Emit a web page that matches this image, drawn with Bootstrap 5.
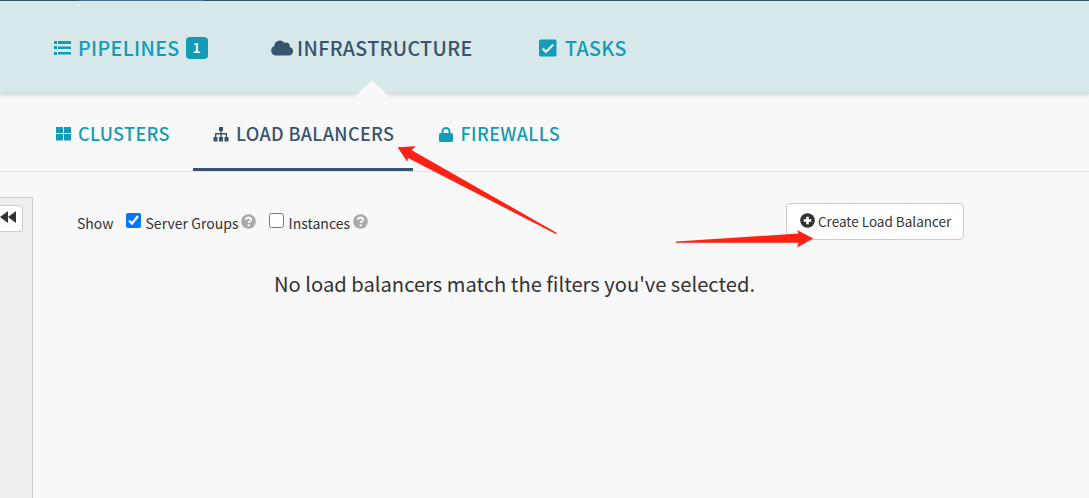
<!DOCTYPE html>
<html lang="en">
<head>
<meta charset="utf-8">
<title>Load Balancers</title>
<link href="https://cdn.jsdelivr.net/npm/bootstrap@5.3.0/dist/css/bootstrap.min.css" rel="stylesheet">
<style>
body{background:#f8f8f8;color:#333;font-family:"Noto Sans CJK SC","Noto Sans",sans-serif;font-size:14px;height:498px;overflow:hidden}
.topbar{height:94px;background:#d7e8eb;border-top:1px solid #36536f;box-shadow:0 1px 4px rgba(0,0,0,.15),inset 0 -3px 3px -2px rgba(0,0,0,.06);padding-left:53px}
.topbar::before{content:"";position:absolute;top:-1px;left:79px;width:124px;height:1px;background:#4a7099}
.main-link{height:93px;color:#139cb5;font-size:19.6px;letter-spacing:.37px;font-weight:500;line-height:20px;text-decoration:none;white-space:nowrap}
.main-link.current::after{content:"";position:absolute;left:83px;bottom:-3px;border:18px solid transparent;border-top:0;border-bottom:17px solid #f8f8f8}
.count{width:22px;height:22px;border-radius:4px;background:#139cb5;font-size:13px;letter-spacing:0;line-height:22px;font-weight:700;margin-left:6px}
.subbar{height:78px;border-bottom:1px solid #dbe5eb;padding-left:36px}
.sub-link{height:77px;color:#139cb5;font-size:18px;letter-spacing:.36px;font-weight:500;line-height:20px;padding:3px 0 3px 20px;text-decoration:none;white-space:nowrap}
.sub-link.current{border-bottom:3px solid #38536d;padding-bottom:0}
.sub-link svg{margin-top:3px}
.current{color:#38536d}
.rail{width:33px;height:310px;margin-top:25px;background:#eee;border:1px solid #ccc;border-left:0}
.collapse-btn{width:23px;height:27px;margin-top:7px;background:#fff;border:1px solid #ccc;border-left:0;border-radius:0 4px 4px 0}
.collapse-btn svg{margin-bottom:3px}
.work{padding:31px 0 0 44px;width:931px}
.tools{height:37px}
.opts{height:40px;line-height:20px}
.opts input{width:15px;height:15px;margin:0 0 6px}
.create{width:178px;height:37px;background:#fff;border:1px solid #ccc;border-radius:4px;color:#333;font-size:13.5px;padding:0 0 2px 13px;line-height:20px;white-space:nowrap}
.empty{font-size:20.160px;line-height:30px;margin:29px 0 0 197px;white-space:nowrap}
svg{flex:none;display:block}
.arrows{left:0;top:0;pointer-events:none}
</style>
</head>
<body class="position-relative">
<nav class="topbar position-relative d-flex">
  <a href="#" class="main-link d-flex align-items-center" style="width:218px">
    <svg width="18" height="14" fill="currentColor"><path d="M1 0h3v3H1zM1 5h3v3H1zM1 11h3v3H1zM5 0h13v3H5zM5 5.500h13v2.500H5zM5 11h13v2.500H5z"/></svg>
    <span style="margin-left:7px">PIPELINES</span><span class="count text-white text-center">1</span>
  </a>
  <a href="#" class="main-link current position-relative d-flex align-items-center" style="width:268px">
    <svg width="22" height="16" viewBox="0 0 22 16" fill="currentColor"><path d="M5 15.500a5 5 0 0 1-1.700-9.600A5.700 5.700 0 0 1 13.700 3a3.500 3.500 0 0 1 5 4 4.300 4.300 0 0 1-1 8.500z"/></svg>
    <span style="margin-left:4px">INFRASTRUCTURE</span>
  </a>
  <a href="#" class="main-link d-flex align-items-center">
    <svg width="18" height="18" viewBox="0 0 18 18"><rect width="17.500" height="17" y=".5" rx="1.500" fill="currentColor"/><path d="m3.500 9.300 3.500 3.500 7.300-7.300" fill="none" stroke="#d7e8eb" stroke-width="2.400"/></svg>
    <span style="margin-left:8px">TASKS</span>
  </a>
</nav>
<nav class="subbar d-flex">
  <a href="#" class="sub-link d-flex align-items-center" style="width:157px">
    <svg width="15" height="14" fill="currentColor"><path d="M0 0h7v6H0zM8 0h7v6H8zM0 7h7v6.500H0zM8 7h7v6.500H8z"/></svg>
    <span style="margin-left:7px">CLUSTERS</span>
  </a>
  <a href="#" class="sub-link current d-flex align-items-center" style="width:220px">
    <svg width="16" height="15" viewBox="0 0 16 15" fill="currentColor"><path d="M6 0h4v4H8.700v2H14v4h1.500v4.500h-4V10h1.200V7.500h-4V10H10v4.500H6V10h1.300V7.500h-4V10h1.200v4.500h-4V10H2V6h5.300V4H6z"/></svg>
    <span style="margin-left:7px">LOAD BALANCERS</span>
  </a>
  <a href="#" class="sub-link d-flex align-items-center" style="padding-left:26px">
    <svg width="14" height="15" viewBox="0 0 14 15"><path d="M3.500 7V4.500a3.500 3.500 0 0 1 7 0V7" fill="none" stroke="currentColor" stroke-width="2"/><rect y="6" width="14" height="9" rx="1.500" fill="currentColor"/></svg>
    <span style="margin-left:7.500px">FIREWALLS</span>
  </a>
</nav>
<main class="d-flex">
  <aside class="rail flex-shrink-0">
    <button class="collapse-btn d-flex align-items-center p-0" aria-label="Collapse filters"><svg width="16" height="12" fill="#333"><path d="M8 0v12L0 6zM16 0v12L8 6z"/></svg></button>
  </aside>
  <section class="work">
    <div class="tools d-flex justify-content-between">
      <div class="opts d-flex align-items-center">
        <span style="width:49px">Show</span>
        <input type="checkbox" checked aria-label="Server Groups">
        <span style="margin-left:4.500px;width:95.500px;letter-spacing:.03px">Server Groups</span>
        <svg width="15" height="15" viewBox="0 0 15 15" style="margin-bottom:4px"><circle cx="7.500" cy="7.500" r="7.300" fill="#aaa"/><path d="M5 5.800C5.200 2.900 10 2.900 10 5.700c0 1.700-2.300 1.800-2.300 3.400M6.600 11.300h2.200" fill="none" stroke="#f8f8f8" stroke-width="2.100"/></svg>
        <input type="checkbox" style="margin-left:13px" aria-label="Instances">
        <span style="margin-left:4.500px;width:64px;letter-spacing:.03px">Instances</span>
        <svg width="15" height="15" viewBox="0 0 15 15" style="margin-bottom:4px"><circle cx="7.500" cy="7.500" r="7.300" fill="#aaa"/><path d="M5 5.800C5.200 2.900 10 2.900 10 5.700c0 1.700-2.300 1.800-2.300 3.400M6.600 11.300h2.200" fill="none" stroke="#f8f8f8" stroke-width="2.100"/></svg>
      </div>
      <button class="create btn d-flex align-items-center">
        <svg width="15" height="15" viewBox="0 0 15 15"><circle cx="7.500" cy="7.500" r="7.300" fill="#333"/><path d="M7.500 3.700v7.600M3.700 7.500h7.600" stroke="#fff" stroke-width="2.600"/></svg>
        <span style="margin-left:3px">Create Load Balancer</span>
      </button>
    </div>
    <p class="empty">No load balancers match the filters you've selected.</p>
  </section>
</main>
<svg class="arrows position-absolute" width="1089" height="498" fill="#ff2114" aria-hidden="true">
  <path d="M397.500 147.300 415.500 146.300 411.800 150.300 557 233 556.300 234.200 408 158 407.300 161.800z"/>
  <path d="M676 241.600 798.500 233.500 797 230 813.300 238.500 797 247.500 798.700 242.800 676 242.700z"/>
</svg>
</body>
</html>
